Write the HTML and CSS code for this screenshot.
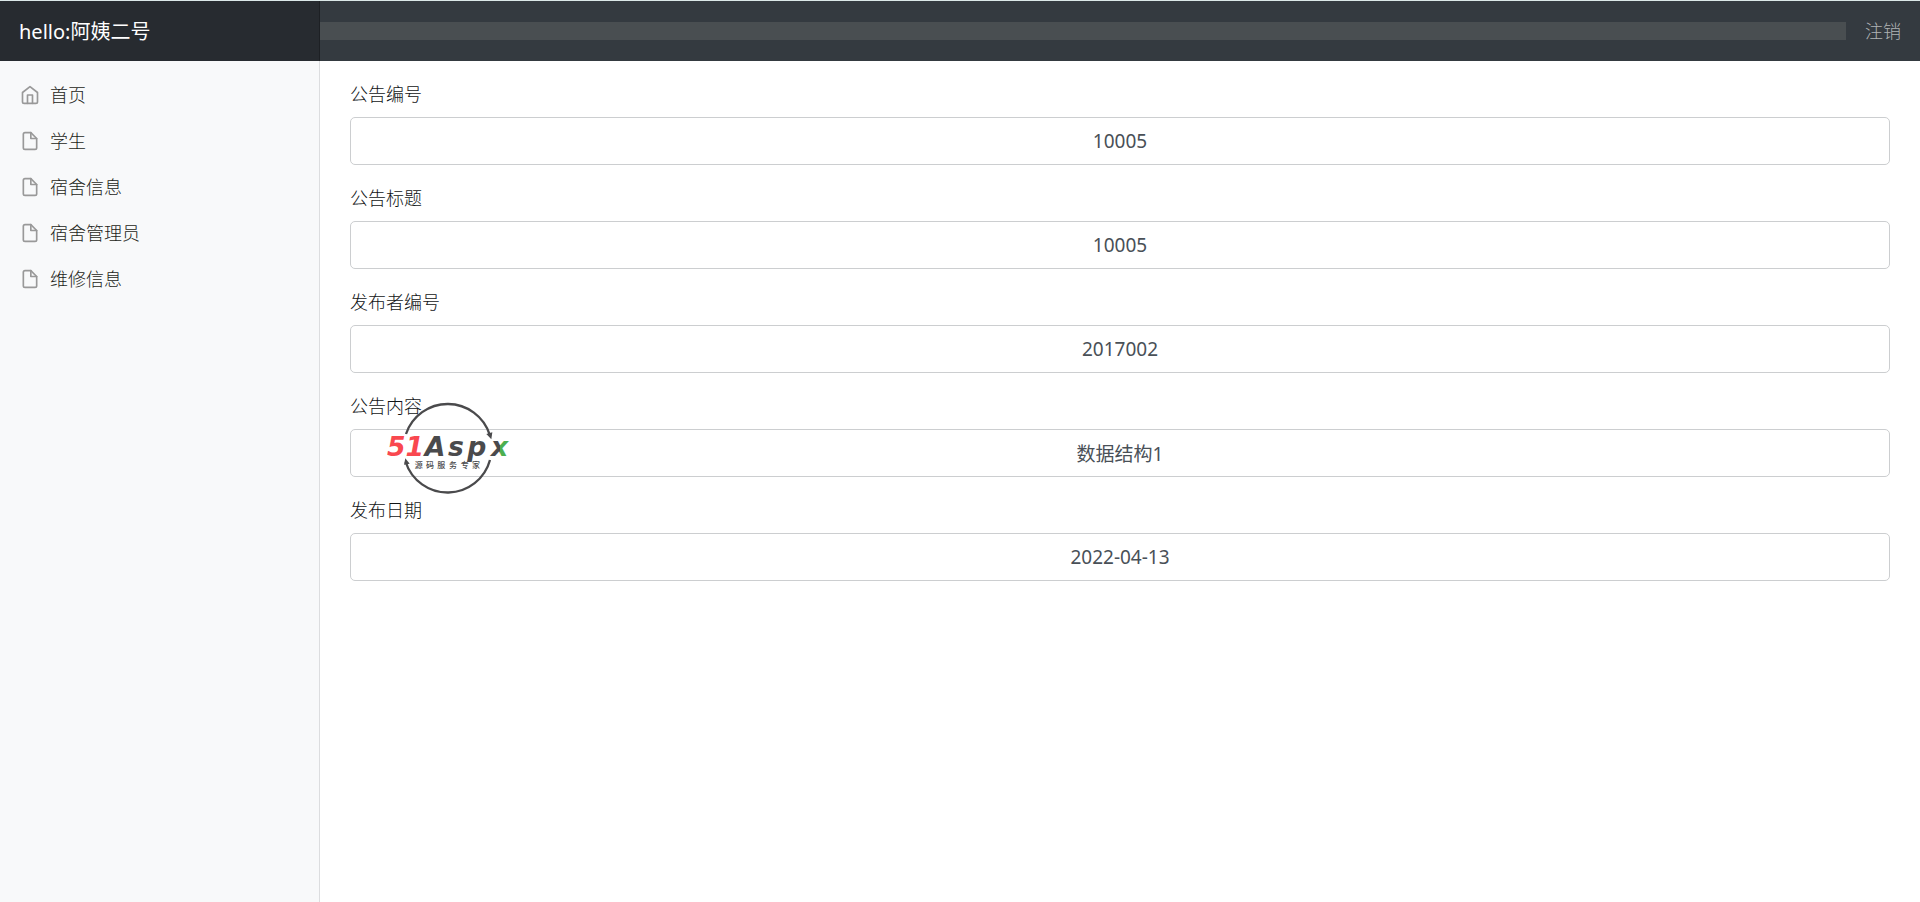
FILE: index.html
```html
<!DOCTYPE html>
<html lang="zh-CN">
<head>
    <meta charset="UTF-8">
    <meta name="viewport" content="width=device-width, initial-scale=1.0">
    <title>公告</title>
    <link rel="stylesheet" href="styles.css">
</head>
<body>

<nav class="navbar">
    <a class="navbar-brand" href="#">hello:阿姨二号</a>
    <input class="navbar-search" type="text" aria-label="Search" disabled>
    <a class="sign-out" href="#">注销</a>
</nav>

<div class="page">
    <aside class="sidebar">
        <ul>
            <li><a href="#">
                <svg class="feather" viewBox="0 0 24 24"><path d="M3 9l9-7 9 7v11a2 2 0 0 1-2 2H5a2 2 0 0 1-2-2z"/><polyline points="9 22 9 12 15 12 15 22"/></svg>
                首页
            </a></li>
            <li><a href="#">
                <svg class="feather" viewBox="0 0 24 24"><path d="M13 2H6a2 2 0 0 0-2 2v16a2 2 0 0 0 2 2h12a2 2 0 0 0 2-2V9z"/><polyline points="13 2 13 9 20 9"/></svg>
                学生
            </a></li>
            <li><a href="#">
                <svg class="feather" viewBox="0 0 24 24"><path d="M13 2H6a2 2 0 0 0-2 2v16a2 2 0 0 0 2 2h12a2 2 0 0 0 2-2V9z"/><polyline points="13 2 13 9 20 9"/></svg>
                宿舍信息
            </a></li>
            <li><a href="#">
                <svg class="feather" viewBox="0 0 24 24"><path d="M13 2H6a2 2 0 0 0-2 2v16a2 2 0 0 0 2 2h12a2 2 0 0 0 2-2V9z"/><polyline points="13 2 13 9 20 9"/></svg>
                宿舍管理员
            </a></li>
            <li><a href="#">
                <svg class="feather" viewBox="0 0 24 24"><path d="M13 2H6a2 2 0 0 0-2 2v16a2 2 0 0 0 2 2h12a2 2 0 0 0 2-2V9z"/><polyline points="13 2 13 9 20 9"/></svg>
                维修信息
            </a></li>
        </ul>
    </aside>

    <main class="content">
        <form>
            <div class="form-group">
                <label for="noticeId">公告编号</label>
                <input type="text" id="noticeId" value="10005">
            </div>
            <div class="form-group">
                <label for="noticeTitle">公告标题</label>
                <input type="text" id="noticeTitle" value="10005">
            </div>
            <div class="form-group">
                <label for="publisherId">发布者编号</label>
                <input type="text" id="publisherId" value="2017002">
            </div>
            <div class="form-group">
                <label for="noticeContent">公告内容</label>
                <input type="text" id="noticeContent" value="数据结构1">
                <!-- 水印 -->
                <svg class="watermark" viewBox="50 36 375 276">
                    <defs>
                        <linearGradient id="xFill">
                            <stop offset="0.55" stop-color="#4a4a4c"/>
                            <stop offset="0.55" stop-color="#4caf50"/>
                        </linearGradient>
                    </defs>
                    <path class="ring" d="M107 132A132 132 0 0 1 358 134"/>
                    <path class="ring" d="M359 210A132 132 0 0 1 106 216"/>
                    <path class="arrow" d="M348 132l18-5-3 21z"/>
                    <path class="arrow" d="M101 224l4-19 13 16z"/>
                    <text class="logo-text red" x="50" y="198">51</text>
                    <text class="logo-text" x="163" y="198">A</text>
                    <text class="logo-text" x="233" y="198">s</text>
                    <text class="logo-text" x="291" y="198">p</text>
                    <text class="logo-text" x="362" y="198" fill="url(#xFill)">x</text>
                    <text class="logo-sub" x="133" y="235">源</text>
                    <text class="logo-sub" x="167" y="235">码</text>
                    <text class="logo-sub" x="201" y="235">服</text>
                    <text class="logo-sub" x="236" y="235">务</text>
                    <text class="logo-sub" x="271" y="235">专</text>
                    <text class="logo-sub" x="305" y="235">家</text>
                </svg>
            </div>
            <div class="form-group">
                <label for="publishDate">发布日期</label>
                <input type="text" id="publishDate" value="2022-04-13">
            </div>
        </form>
    </main>
</div>

</body>
</html>
```
FILE: styles.css
```css
* {
    box-sizing: border-box;
}
body {
    margin: 0;
    min-height: 100vh;
    display: flex;
    flex-direction: column;
    font-family: "Noto Sans", "Noto Sans CJK SC", sans-serif;
    font-size: 18px;
    font-weight: 300;
    line-height: 26px;
    color: #111416;
    background-color: #fff;
}
a {
    text-decoration: none;
}
/* Top bar */
.navbar {
    display: flex;
    align-items: center;
    height: 61px;
    border-top: 1px solid #dbe8e8;
    background-color: #343a40;
}
.navbar-brand {
    width: 320px;
    padding: 18px 19px 16px;
    font-size: 20px;
    font-weight: 400;
    color: #fff;
    background-color: #272b30;
    box-shadow: inset -1px 0 0 rgba(0, 0, 0, 0.25);
}
.navbar-search {
    flex: 1;
    min-width: 0;
    height: 18px;
    border: 0;
    background-color: #494e51;
}
.sign-out {
    padding: 0 19px;
    color: #b0b3b5;
}
.page {
    flex: 1;
    display: flex;
}
/* Sidebar */
.sidebar {
    width: 320px;
    padding-top: 11px;
    background-color: #f8f9fa;
    border-right: 1px solid #dcdddf;
}
.sidebar ul {
    list-style-type: none;
    margin: 0;
    padding: 0;
}
.sidebar a {
    display: flex;
    align-items: center;
    gap: 10px;
    padding: 10px 20px;
    color: #1c1e20;
}
.feather {
    width: 20px;
    height: 20px;
    fill: none;
    stroke: #999;
    stroke-width: 2;
    stroke-linecap: round;
    stroke-linejoin: round;
}
/* Form */
.content {
    flex: 1;
    padding: 20px 30px;
}
.form-group {
    position: relative;
    margin-bottom: 20px;
}
.form-group label {
    display: block;
    margin-bottom: 10px;
}
.form-group input {
    display: block;
    width: 100%;
    height: 48px;
    padding: 8px 15px;
    border: 1px solid #ccced0;
    border-radius: 5px;
    font-family: inherit;
    font-size: 19px;
    font-weight: 400;
    text-align: center;
    color: #495057;
    background-color: #fff;
}
.watermark {
    position: absolute;
    top: 9px;
    left: 37px;
    width: 125px;
    height: 92px;
    pointer-events: none;
}
.ring {
    fill: none;
    stroke: #4a4a4c;
    stroke-width: 7;
}
.arrow {
    fill: #4a4a4c;
}
.logo-text {
    font-family: "DejaVu Sans", sans-serif;
    font-size: 80px;
    font-weight: bold;
    font-style: italic;
}
.logo-text:not([fill]) {
    fill: #4a4a4c;
}
.logo-text.red {
    fill: #f9484f;
}
.logo-sub {
    font-family: "Noto Sans CJK SC", sans-serif;
    font-size: 24px;
    font-weight: 500;
    fill: #4a4a4c;
}
```
